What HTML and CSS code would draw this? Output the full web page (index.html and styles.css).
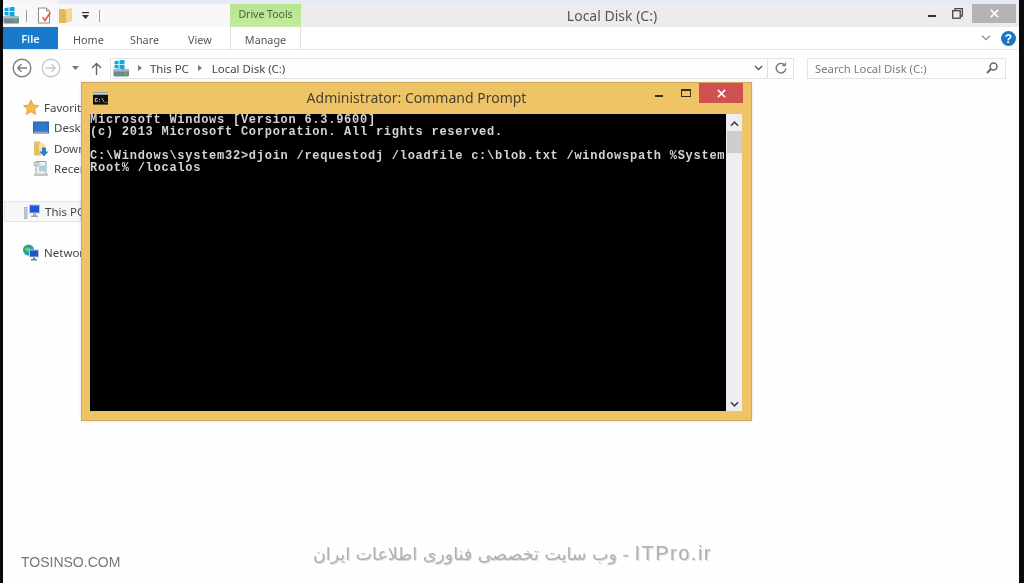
FILE: index.html
```html
<!DOCTYPE html>
<html lang="en">
<head>
<meta charset="utf-8">
<title>Local Disk (C:)</title>
<link rel="stylesheet" href="styles.css">
</head>
<body>
<svg class="defs" width="0" height="0" aria-hidden="true">
  <symbol id="drive" viewBox="0 0 16 17">
    <rect x="0.500" y="9" width="15.500" height="7.500" rx="1.500" fill="#71858f"/>
    <rect x="0.500" y="9" width="15.500" height="2.500" rx="1" fill="#a9b9c2"/>
    <rect x="11" y="13" width="3" height="1.500" fill="#4fc94a"/>
    <path d="M1.500 1.300l4-.7v3.700h-4zM6.500.4l5-.9v4.800h-5zM1.500 5.100h4v3.600l-4-.6zM6.500 5.100h5v4.400l-5-.7z" fill="#0fa6e4"/>
  </symbol>
</svg>

<div class="screen">
  <div class="topstrip"></div>

  <main class="explorer">
    <header class="titlebar">
      <div class="qat">
        <svg class="ic16" viewBox="0 0 16 17"><use href="#drive"/></svg>
        <span class="qat-sep sep-a"></span>
        <svg class="ic16 doc" viewBox="0 0 16 17">
          <path d="M1.500 1h8l3 3v12h-11z" fill="#fff" stroke="#8a8a8a"/>
          <path d="M9.500 1v3h3" fill="#ddd" stroke="#8a8a8a"/>
          <path d="M5 10.500l3 4.500 6-9-1.300-.9-4.800 6.900-1.700-2.300z" fill="#df5f3a"/>
        </svg>
        <svg class="ic16 folder" viewBox="0 0 16 17">
          <path d="M1 2h6l1 2v12H1z" fill="#e2b952"/>
          <path d="M8 2l6-1v13l-6 2z" fill="#f5d98a"/>
        </svg>
        <svg class="dropdown" viewBox="0 0 9 8">
          <rect x="1" y="0" width="7" height="1.200" fill="#333"/>
          <path d="M1 3h7L4.500 7z" fill="#333"/>
        </svg>
        <span class="qat-sep sep-b"></span>
      </div>
      <div class="context-tab">Drive Tools</div>
      <div class="window-title">Local Disk (C:)</div>
      <div class="window-controls">
        <span class="min-bar"></span>
        <svg class="restore" viewBox="0 0 11 11" fill="none" stroke="#444" stroke-width="1.300">
          <rect x="0.700" y="2.700" width="7.500" height="7.500"/>
          <path d="M3 2.500V.7h7.300V8H8.500"/>
        </svg>
        <button class="close-btn" type="button">
          <svg viewBox="0 0 10 10" class="x-mark"><path d="M1 1l8 8M9 1l-8 8"/></svg>
        </button>
      </div>
    </header>

    <nav class="ribbon">
      <div class="file-tab">File</div>
      <div class="tab tab-home">Home</div>
      <div class="tab tab-share">Share</div>
      <div class="tab tab-view">View</div>
      <div class="tab tab-manage">Manage</div>
      <div class="ribbon-right">
        <svg class="ribbon-chev" viewBox="0 0 10 6" fill="none" stroke="#8d8d8d" stroke-width="1.300"><path d="M1 .7l4 4 4-4"/></svg>
        <svg class="help" viewBox="0 0 15 15">
          <circle cx="7.500" cy="7.500" r="7.500" fill="#1b78c8"/>
          <text x="7.500" y="12" text-anchor="middle" class="help-q">?</text>
        </svg>
      </div>
    </nav>

    <div class="addressrow">
      <svg class="nav-circle" viewBox="0 0 20 20" fill="none" stroke="#7d7d7d" stroke-width="1.400">
        <circle cx="10" cy="10" r="8.800"/>
        <path d="M15 10H6M9.500 6.200L5.700 10l3.800 3.800"/>
      </svg>
      <svg class="nav-circle fwd" viewBox="0 0 20 20" fill="none" stroke="#c9c9c9" stroke-width="1.400">
        <circle cx="10" cy="10" r="8.800"/>
        <path d="M5 10h9M10.500 6.200l3.800 3.800-3.800 3.800"/>
      </svg>
      <svg class="nav-drop" viewBox="0 0 7 4"><path d="M0 0h7L3.500 4z" fill="#777"/></svg>
      <svg class="nav-up" viewBox="0 0 11 13" fill="none" stroke="#666" stroke-width="1.400"><path d="M5.500 13V1.500M1 6l4.500-4.500L10 6"/></svg>

      <div class="address">
        <svg class="ic16" viewBox="0 0 16 17"><use href="#drive"/></svg>
        <span class="crumb-tri first"></span>
        <span class="crumb">This PC</span>
        <span class="crumb-tri"></span>
        <span class="crumb">Local Disk (C:)</span>
        <span class="address-fill"></span>
        <svg class="addr-chev" viewBox="0 0 10 6" fill="none" stroke="#555" stroke-width="1.400"><path d="M1 .7l4 4 4-4"/></svg>
        <span class="addr-div"></span>
        <svg class="refresh" viewBox="0 0 12 12" fill="none" stroke="#777" stroke-width="1.400">
          <path d="M9.800 3.200A4.800 4.800 0 1 0 10.800 6.500"/>
          <path d="M7.300 3.600h3V.6" stroke-width="1.100"/>
        </svg>
      </div>

      <div class="search">
        <span class="search-text">Search Local Disk (C:)</span>
        <svg class="magnifier" viewBox="0 0 12 12" fill="none" stroke="#666" stroke-width="1.500">
          <circle cx="7.500" cy="4.500" r="3.500"/>
          <path d="M5 7L1 11" stroke-width="2"/>
        </svg>
      </div>
    </div>

    <aside class="sidebar">
      <div class="side-item head">
        <svg class="ic16" viewBox="0 0 16 16"><path d="M8 .5l2.300 5 5.200.6-3.900 3.500 1.100 5.400L8 12.300 3.300 15l1.100-5.400L.5 6.100l5.200-.6z" fill="#f7b942" stroke="#e08a3c" stroke-width=".7"/></svg>
        <span>Favorites</span>
      </div>
      <div class="side-item sub">
        <svg class="ic16" viewBox="0 0 16 16"><rect x="0" y="2" width="16" height="12" fill="#3a62a8"/><rect x="1.500" y="3.500" width="13" height="8" fill="#2f7ad0"/><rect x="1" y="12" width="14" height="1.500" fill="#8fa4c4"/></svg>
        <span>Desktop</span>
      </div>
      <div class="side-item sub">
        <svg class="ic16" viewBox="0 0 16 16"><path d="M1 1h6l1 2v12H1z" fill="#e2c065"/><path d="M6 3h6v8H6z" fill="#f6e3a4"/><path d="M9 7h4v4h2.500L11 16l-4.500-5H9z" fill="#2c7fd1"/></svg>
        <span>Downloads</span>
      </div>
      <div class="side-item sub">
        <svg class="ic16" viewBox="0 0 16 16"><path d="M3 1h10v13H3z" fill="#eef1f4" stroke="#9aa3aa"/><path d="M1 2h5v3H1z" fill="#cfd6da" stroke="#a0a6aa" stroke-width=".6"/><rect x="6" y="5" width="6" height="6" fill="#a9cfe0"/><path d="M1 13h14v2.500H1z" fill="#c2c7cb"/></svg>
        <span>Recent places</span>
      </div>
      <div class="side-item head pc">
        <svg class="ic16" viewBox="0 0 16 16"><rect x="5" y="1" width="11" height="9" fill="#b8c7d8"/><rect x="6" y="2" width="9" height="7" fill="#1d55d8"/><path d="M9 10h3v2h2v1.500H7V12h2z" fill="#9aa5ae"/><rect x="0" y="4" width="3" height="11" fill="#c9ced2" stroke="#8e959a" stroke-width=".6"/></svg>
        <span>This PC</span>
      </div>
      <div class="side-item head net">
        <svg class="ic16" viewBox="0 0 16 16"><circle cx="5.500" cy="5.500" r="5.500" fill="#23a2a8"/><path d="M2 3.500h5l-1 3H3z" fill="#7ecb5c"/><rect x="6" y="5" width="10" height="8" fill="#b8c7d8"/><rect x="7" y="6" width="8" height="6" fill="#1d55d8"/><path d="M10 13h2v1.500h2V16H8v-1.500h2z" fill="#6f7f8c"/></svg>
        <span>Network</span>
      </div>
    </aside>
  </main>

  <section class="cmd">
    <header class="cmd-title">
      <svg class="cmd-icon" viewBox="0 0 16 13">
        <rect width="16" height="13" fill="#111"/>
        <rect width="16" height="2.500" fill="#c8d0d6"/>
        <text x="1.500" y="10" class="cmd-icon-text">C:\_</text>
      </svg>
      <span class="cmd-name">Administrator: Command Prompt</span>
      <span class="cmd-min"></span>
      <span class="cmd-max"></span>
      <button class="cmd-close" type="button">
        <svg viewBox="0 0 10 10" class="x-mark"><path d="M1 1l8 8M9 1l-8 8"/></svg>
      </button>
    </header>
    <div class="cmd-body">
      <pre class="console">Microsoft Windows [Version 6.3.9600]
(c) 2013 Microsoft Corporation. All rights reserved.

C:\Windows\system32&gt;djoin /requestodj /loadfile c:\blob.txt /windowspath %System
Root% /localos</pre>
      <div class="scrollbar">
        <svg class="scroll-arrow" viewBox="0 0 10 6" fill="none" stroke="#444" stroke-width="1.800"><path d="M1 5l4-4 4 4"/></svg>
        <div class="scroll-thumb"></div>
        <span class="scroll-space"></span>
        <svg class="scroll-arrow" viewBox="0 0 10 6" fill="none" stroke="#444" stroke-width="1.800"><path d="M1 1l4 4 4-4"/></svg>
      </div>
    </div>
  </section>

  <div class="mark-left">TOSINSO.COM</div>
  <div class="mark-center" dir="rtl"><span class="mark-brand">ITPro.ir</span> - وب سایت تخصصی فناوری اطلاعات ایران</div>
</div>
</body>
</html>
```

FILE: styles.css
```css
* { box-sizing: border-box; }

html, body {
  margin: 0;
  padding: 0;
  width: 1024px;
  height: 583px;
  overflow: hidden;
  background: #fff;
}

.defs { position: absolute; }

.screen {
  position: relative;
  width: 1024px;
  height: 583px;
  display: flex;
  flex-direction: column;
  background: #fefefe;
  border-left: 3px solid #0a0a0a;
  border-right: 5px solid #0a0a0a;
  font-family: "Noto Sans", "Open Sans", sans-serif;
  font-size: 11px;
  color: #444;
  overflow: hidden;
  filter: blur(0.4px);
}

.topstrip {
  height: 4px;
  margin: 0 -5px 0 -3px;
  background: linear-gradient(to right, #f6f6f6 56px, #e4eaf6 60px);
  flex: none;
}

.explorer {
  flex: 1;
  display: flex;
  flex-direction: column;
}

svg { display: block; flex: none; }
.ic16 { width: 16px; height: 17px; }

/* Title bar */
.titlebar {
  height: 23px;
  display: flex;
  background: #ececec;
  flex: none;
}

.qat {
  width: 227px;
  display: flex;
  align-items: center;
  background: #f8f8f8;
}

.qat-sep { width: 1px; height: 12px; background: #9a9a9a; }
.sep-a { margin-left: 7px; }
.doc { margin-left: 10px; }
.folder { margin-left: 5px; }
.dropdown { width: 9px; height: 8px; margin-left: 7px; }
.sep-b { margin-left: 9px; }

.context-tab {
  width: 71px;
  height: 23px;
  background: linear-gradient(#b7e58e, #c5ea9f);
  color: #4b5f3c;
  text-align: center;
  font-size: 10.500px;
  line-height: 21px;
}

.window-title {
  flex: 1;
  text-align: center;
  font-size: 14px;
  line-height: 23px;
  color: #555;
  padding-right: 5px;
}

.window-controls {
  width: 91px;
  display: flex;
  align-items: flex-start;
  padding-right: 3px;
}

.min-bar {
  width: 8px;
  height: 2px;
  margin-top: 11px;
  background: #333;
}

.restore {
  width: 11px;
  height: 11px;
  margin: 4px 0 0 16px;
}

.close-btn {
  width: 44px;
  height: 19px;
  margin-left: 9px;
  padding: 0;
  border: 0;
  background: #b4b4b4;
  display: flex;
  align-items: center;
  justify-content: center;
}

.x-mark {
  width: 9px;
  height: 9px;
  stroke: #fff;
  stroke-width: 1.800;
  fill: none;
}

/* Ribbon */
.ribbon {
  height: 23px;
  display: flex;
  background: #fff;
  border-bottom: 1px solid #e6e6e6;
  flex: none;
}

.file-tab {
  width: 55px;
  background: #1979ca;
  color: #f4f9fd;
  text-align: center;
  font-size: 11px;
  font-weight: 600;
  line-height: 24px;
}

.tab {
  line-height: 26px;
  font-size: 10.800px;
  color: #555;
}

.tab-home { margin-left: 15px; width: 57px; }
.tab-share { width: 58px; }
.tab-view { width: 42px; }

.tab-manage {
  width: 71px;
  text-align: center;
  border-left: 1px solid #dedede;
  border-right: 1px solid #dedede;
}

.ribbon-right {
  flex: 1;
  display: flex;
  justify-content: flex-end;
  align-items: center;
  gap: 10px;
  padding-right: 3px;
}

.ribbon-chev { width: 10px; height: 6px; }
.help { width: 15px; height: 15px; }

.help-q {
  fill: #fff;
  font: bold 12px "Liberation Sans", sans-serif;
}

/* Address row */
.addressrow {
  height: 36px;
  display: flex;
  align-items: center;
  flex: none;
}

.nav-circle { width: 20px; height: 20px; margin-left: 9px; }
.nav-drop { width: 7px; height: 4px; margin-left: 11px; }
.nav-up { width: 11px; height: 13px; margin-left: 12px; }

.address {
  width: 684px;
  height: 21px;
  margin-left: 8px;
  display: flex;
  align-items: center;
  border: 1px solid #e3e3e3;
  padding-left: 2px;
  font-size: 11.400px;
  color: #444;
}

.crumb-tri {
  width: 0;
  height: 0;
  margin: 0 10px 0 9px;
  border-left: 4px solid #7a7a7a;
  border-top: 3.500px solid transparent;
  border-bottom: 3.500px solid transparent;
}

.crumb-tri.first { margin-left: 9px; margin-right: 8px; }
.address-fill { flex: 1; }
.addr-chev { width: 9px; height: 6px; }
.addr-div { width: 1px; height: 19px; margin-left: 4px; background: #e0e0e0; }
.refresh { width: 12px; height: 12px; margin: 0 6px 0 7px; }

.search {
  width: 199px;
  height: 21px;
  margin-left: 13px;
  display: flex;
  align-items: center;
  justify-content: space-between;
  border: 1px solid #e3e3e3;
  padding: 0 7px;
  color: #7a7a7a;
}

.search-text { font-size: 11.300px; }
.magnifier { width: 12px; height: 12px; }

/* Sidebar: the command window covers everything past its left edge */
.sidebar {
  width: 78px;
  padding-top: 11px;
  display: flex;
  flex-direction: column;
  font-size: 11.500px;
  color: #444;
  overflow: hidden;
}

.side-item {
  height: 20px;
  display: flex;
  align-items: center;
  gap: 5px;
  white-space: nowrap;
  flex: none;
}

.head { padding-left: 20px; }
.sub { padding-left: 30px; margin-top: 0.500px; }

.pc {
  margin: 22.500px 0 0 1px;
  padding-left: 19px;
  height: 21px;
  background: #f7f7f7;
  border: 1px solid #e6e6e6;
}

.net { margin-top: 20px; }

/* Command prompt window */
.cmd {
  position: absolute;
  left: 78px;
  top: 82px;
  width: 671px;
  height: 339px;
  display: flex;
  flex-direction: column;
  background: #efc467;
  border: 1px solid #cfa95a;
  padding: 0 8px 9px 8px;
  box-shadow: 0 0 3px rgba(0, 0, 0, 0.12);
}

.cmd-title {
  height: 31px;
  display: flex;
  flex: none;
  align-items: flex-start;
}

.cmd-icon { width: 15px; height: 13px; margin: 9px 0 0 3px; }

.cmd-icon-text {
  fill: #e8e8e8;
  font: bold 6px "Liberation Mono", monospace;
}

.cmd-name {
  flex: 1;
  font-size: 14px;
  line-height: 30px;
  text-align: center;
  padding-left: 70px;
  color: #4a4130;
}

.cmd-min {
  width: 8px;
  height: 2px;
  margin-top: 12px;
  background: #3b3118;
}

.cmd-max {
  width: 10px;
  height: 8px;
  margin: 6px 0 0 18px;
  border: 1px solid #3b3118;
  border-top-width: 2px;
}

.cmd-close {
  width: 44px;
  height: 20px;
  margin-left: 8px;
  padding: 0;
  border: 0;
  background: #cf5050;
  display: flex;
  align-items: center;
  justify-content: center;
}

.cmd-body {
  flex: 1;
  display: flex;
  min-height: 0;
}

.console {
  margin: 0;
  width: 636px;
  padding: 0;
  background: #000;
  color: #d4d4d4;
  font-family: "Liberation Mono", monospace;
  font-size: 12px;
  font-weight: bold;
  line-height: 12px;
  letter-spacing: 0.740px;
  white-space: pre;
  overflow: hidden;
}

.scrollbar {
  width: 16px;
  display: flex;
  flex-direction: column;
  align-items: center;
  background: #eeeef2;
}

.scroll-arrow { width: 9px; height: 6px; margin: 7px 0 4px; }
.scroll-thumb { width: 15px; height: 22px; background: #cdcdcd; }
.scroll-space { flex: 1; }

/* Watermarks */
.mark-left {
  position: absolute;
  left: 18px;
  top: 554px;
  font-family: "Liberation Sans", sans-serif;
  font-size: 14px;
  line-height: 16px;
  color: #777;
}

.mark-center {
  position: absolute;
  left: 310px;
  top: 541px;
  width: 399px;
  font-family: "DejaVu Sans", sans-serif;
  font-size: 17.500px;
  line-height: 24px;
  white-space: nowrap;
  color: #b0b0b0;
  text-shadow: 1px 1px 0 #dcdcdc;
  text-align: center;
}

.mark-brand {
  font-family: "Liberation Sans", sans-serif;
  font-size: 20px;
  letter-spacing: 1.500px;
}
```
